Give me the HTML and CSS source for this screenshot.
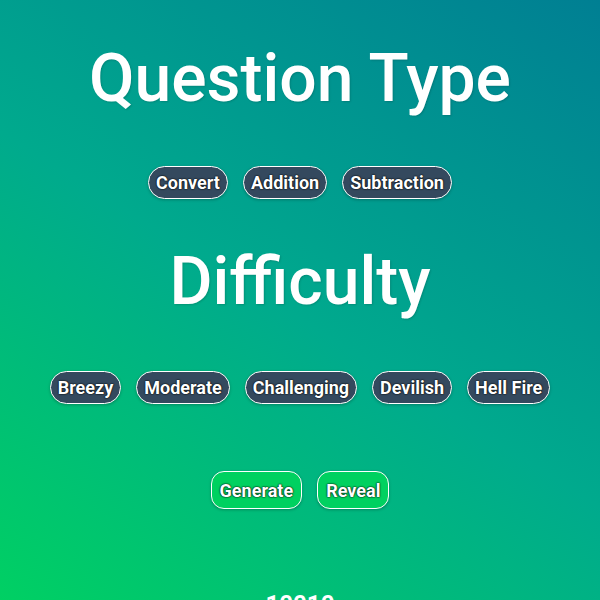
FILE: index.html
```html
<!DOCTYPE html>
<html>
<head>
<meta charset="utf-8">
<link rel="stylesheet" href="styles.css">
</head>
<body>
<main class="page">
  <h1 class="title">Question Type</h1>
  <div class="row types">
    <button class="pill">Convert</button>
    <button class="pill">Addition</button>
    <button class="pill">Subtraction</button>
  </div>
  <h1 class="title title-2">Difficulty</h1>
  <div class="row levels">
    <button class="pill">Breezy</button>
    <button class="pill">Moderate</button>
    <button class="pill">Challenging</button>
    <button class="pill">Devilish</button>
    <button class="pill">Hell Fire</button>
  </div>
  <div class="row actions">
    <button class="pill go">Generate</button>
    <button class="pill go">Reveal</button>
  </div>
  <div class="answer">10010</div>
</main>
</body>
</html>
```
FILE: styles.css
```css
html, body {
  margin: 0;
  padding: 0;
  height: 100%;
}
body {
  background: linear-gradient(32deg, #00d063 0%, #00aa8d 48%, #007f93 100%);
  font-family: Roboto, "Noto Sans", sans-serif;
  color: #fff;
  overflow: hidden;
}
.page {
  display: flex;
  flex-direction: column;
  align-items: center;
  padding-top: 41px;
}
.title {
  margin: 0;
  font-size: 66px;
  font-weight: 500;
  line-height: 76px;
  text-shadow: 1px 1px 2px rgba(0,0,0,0.15);
}
.title-2 {
  margin-top: 45px;
}
.row {
  display: flex;
  gap: 15px;
}
.types {
  margin-top: 49px;
}
.levels {
  margin-top: 51px;
}
.pill {
  font-family: Roboto, sans-serif;
  font-size: 18px;
  font-weight: 700;
  color: #fff;
  background: #34495e;
  border: 1px solid #fff;
  border-radius: 17px;
  height: 33px;
  padding: 0 7px;
  text-shadow: 0 0 2px #000, 0 0 1px #000;
  box-shadow: 0 1px 3px rgba(0,0,0,0.25);
}
.actions {
  margin-top: 67px;
}
.go {
  background: #00d160;
  height: 38px;
  padding: 0 8px;
  border-radius: 13px;
}
.answer {
  margin-top: 81px;
  font-size: 24px;
  font-weight: 700;
  line-height: 28px;
}
```
